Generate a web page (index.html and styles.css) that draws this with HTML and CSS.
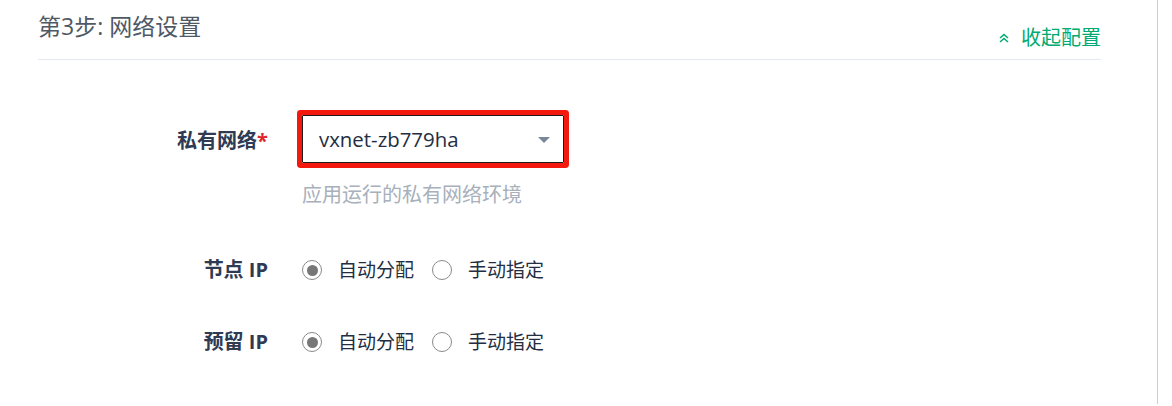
FILE: index.html
```html
<!DOCTYPE html>
<html lang="zh">
<head>
<meta charset="utf-8">
<title>网络设置</title>
<link rel="stylesheet" href="styles.css">
</head>
<body>
<div class="page">
  <section class="step">
    <header class="step-head">
      <h2 class="step-title">第3步: 网络设置</h2>
      <a class="collapse" href="#">
        <svg class="collapse-icon" viewBox="0 0 12 12" width="12" height="12" aria-hidden="true">
          <path d="M2 6 L6 2.5 L10 6 M2 10 L6 6.5 L10 10" fill="none" stroke="currentColor" stroke-width="1.6"/>
        </svg>
        收起配置
      </a>
    </header>

    <div class="form">
      <div class="row row-select">
        <div class="label">私有网络<span class="req">*</span></div>
        <div class="control">
          <div class="select">
            <span class="select-value">vxnet-zb779ha</span>
            <span class="caret"></span>
          </div>
          <div class="help">应用运行的私有网络环境</div>
        </div>
      </div>

      <div class="row row-radio first">
        <div class="label">节点 IP</div>
        <div class="control radios">
          <label class="radio checked"><span class="dot"></span>自动分配</label>
          <label class="radio"><span class="dot"></span>手动指定</label>
        </div>
      </div>

      <div class="row row-radio second">
        <div class="label">预留 IP</div>
        <div class="control radios">
          <label class="radio checked"><span class="dot"></span>自动分配</label>
          <label class="radio"><span class="dot"></span>手动指定</label>
        </div>
      </div>
    </div>
  </section>
</div>
</body>
</html>
```

FILE: styles.css
```css
html, body {
  margin: 0;
  padding: 0;
  background: #fff;
}

body {
  font-family: "Open Sans", "Noto Sans CJK SC", sans-serif;
  color: #242e42;
}

.page {
  width: 1157px;
  height: 404px;
  border-right: 1px solid #c9cdd5;
  box-sizing: content-box;
}

.step {
  padding: 0 56px 0 38px;
}

.step-head {
  display: flex;
  justify-content: space-between;
  align-items: flex-end;
  height: 60px;
  border-bottom: 1px solid #e3e9ef;
  box-sizing: border-box;
}

.step-title {
  margin: 0;
  align-self: flex-start;
  padding-top: 11px;
  font-size: 23px;
  line-height: 30px;
  font-weight: 400;
  color: #4f5966;
}

.collapse {
  display: flex;
  align-items: center;
  gap: 11px;
  margin-bottom: 9px;
  font-size: 20px;
  line-height: 24px;
  color: #00aa72;
  text-decoration: none;
}

.collapse-icon {
  display: block;
}

.form {
  padding-top: 55px;
}

.row {
  display: flex;
  gap: 34px;
}

.label {
  width: 230px;
  flex: none;
  text-align: right;
  font-size: 20px;
  font-weight: 700;
  color: #2f3b52;
}

.row-select .label {
  line-height: 52px;
}

.req {
  color: #e0262a;
}

.control {
  display: flex;
  flex-direction: column;
}

.select {
  width: 262px;
  height: 48px;
  box-sizing: border-box;
  border: 1px solid #1d1d1d;
  border-radius: 1px;
  box-shadow: 0 0 0 5px #f4190e;
  display: flex;
  align-items: center;
  justify-content: space-between;
  padding: 0 13px 0 16px;
}

.select-value {
  font-size: 20.4px;
  color: #242e42;
  line-height: 24px;
}

.caret {
  width: 0;
  height: 0;
  border-left: 6px solid transparent;
  border-right: 6px solid transparent;
  border-top: 6px solid #79879c;
  margin-top: 1px;
}

.help {
  margin-top: 18px;
  font-size: 20px;
  line-height: 28px;
  color: #a7b0bb;
}

.row-radio {
  line-height: 28px;
}

.row-radio.first {
  margin-top: 47px;
}

.row-radio.second {
  margin-top: 44px;
}

.row-radio .label {
  line-height: 28px;
}

.radios {
  flex-direction: row;
  align-items: center;
  gap: 18px;
}

.radio {
  display: flex;
  align-items: center;
  gap: 16px;
  font-size: 19px;
  color: #242e42;
}

.dot {
  width: 20px;
  height: 20px;
  box-sizing: border-box;
  border: 1.5px solid #8a8a8a;
  border-radius: 50%;
  display: flex;
  align-items: center;
  justify-content: center;
  background: #fff;
}

.radio.checked .dot::after {
  content: "";
  width: 11px;
  height: 11px;
  border-radius: 50%;
  background: #777;
}
```
